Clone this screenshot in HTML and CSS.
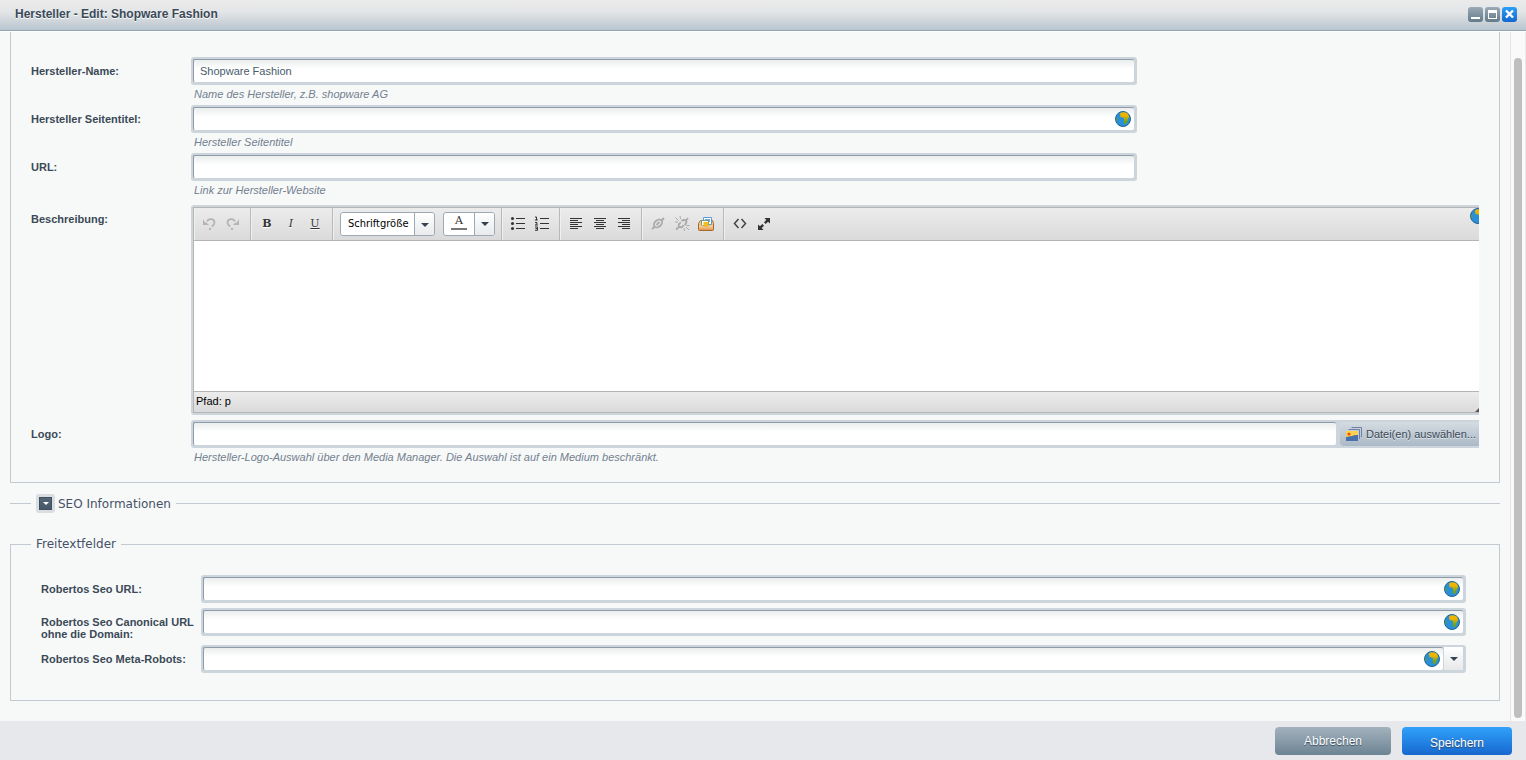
FILE: index.html
```html
<!DOCTYPE html>
<html lang="de">
<head>
<meta charset="utf-8">
<title>Hersteller - Edit: Shopware Fashion</title>
<link rel="stylesheet" href="styles.css">
</head>
<body>
<svg class="defs" aria-hidden="true">
  <defs>
    <linearGradient id="land" x1="0" y1="0" x2="0" y2="1"><stop offset="0.3" stop-color="#f0b400"/><stop offset="0.8" stop-color="#6aa51a"/></linearGradient>
    <linearGradient id="tray" x1="0" y1="0" x2="0" y2="1"><stop offset="0" stop-color="#fad9a8"/><stop offset="1" stop-color="#e0984e"/></linearGradient>
    <symbol id="globe" viewBox="0 0 16 16">
      <circle cx="8" cy="8" r="7.500" fill="#2a8fd6" stroke="#1f6590"/>
      <path d="M5 2.500L7 1.200l4 .3 2 1.500 1.200 3-1.400 2-.3 2.500-1.500 2.500H9.500L9 12V7.500L8 6.500 5.500 6.300z" fill="url(#land)"/>
      <path d="M1 7l1.200.6.3 1.500-1 1.200z" fill="#6aa51a"/>
    </symbol>
    <symbol id="arrow" viewBox="0 0 8 4"><path d="M0 0h8L4 4z" fill="#36424f"/></symbol>
  </defs>
</svg>
<div class="window">
  <header class="titlebar">
    <h1 class="title">Hersteller - Edit: Shopware Fashion</h1>
    <div class="tools">
      <button class="tool" aria-label="Minimieren"><svg width="15" height="15"><path d="M3 10h9v2H3z" fill="#fff"/></svg></button>
      <button class="tool" aria-label="Maximieren"><svg width="15" height="15"><path d="M3 3h9v9H3zM4 6v5h7V6z" fill="#fff" fill-rule="evenodd"/></svg></button>
      <button class="tool tool-close" aria-label="Schließen"><svg width="15" height="15"><path d="M4 3.500l7 7M11 3.500l-7 7" stroke="#fff" stroke-width="2.400"/></svg></button>
    </div>
  </header>
  <div class="body">
    <main class="content">
      <fieldset class="panel panel-main">
        <div class="row">
          <label class="label" for="name">Hersteller-Name:</label>
          <div class="cell short">
            <div class="field"><input class="input" id="name" type="text" value="Shopware Fashion"></div>
            <p class="help">Name des Hersteller, z.B. shopware AG</p>
          </div>
        </div>
        <div class="row">
          <label class="label" for="seitentitel">Hersteller Seitentitel:</label>
          <div class="cell short">
            <div class="field"><input class="input" id="seitentitel" type="text"><svg class="globe"><use href="#globe"/></svg></div>
            <p class="help">Hersteller Seitentitel</p>
          </div>
        </div>
        <div class="row">
          <label class="label" for="url">URL:</label>
          <div class="cell short">
            <div class="field"><input class="input" id="url" type="text"></div>
            <p class="help">Link zur Hersteller-Website</p>
          </div>
        </div>
        <div class="row row-editor">
          <label class="label" for="beschreibung">Beschreibung:</label>
          <div class="cell editor">
            <div class="toolbar">
              <div class="group">
                <button class="tb" aria-label="Rückgängig"><svg width="16" height="16"><path d="M6 5.500c1.500-3.500 7.500-3 7.500 1 0 2-1.200 3-2.700 4" fill="none" stroke="#b4b4b4" stroke-width="1.800"/><path d="M2 3v6h6l-2-2-2-.5zM8 12h2v2H8z" fill="#b4b4b4"/></svg></button>
                <button class="tb" aria-label="Wiederholen"><svg width="16" height="16"><path d="M10 5.500C8.500 2 2.500 2.500 2.500 6.500c0 2 1.200 3 2.700 4" fill="none" stroke="#b4b4b4" stroke-width="1.800"/><path d="M14 3v6H8l2-2 2-.5zM6 12h2v2H6z" fill="#b4b4b4"/></svg></button>
              </div>
              <div class="group">
                <button class="tb glyph bold">B</button>
                <button class="tb glyph italic">I</button>
                <button class="tb glyph underline">U</button>
              </div>
              <div class="group group-selects">
                <div class="combo">
                  <select class="size-select" aria-label="Schriftgröße"><option>Schriftgröße</option></select>
                  <svg class="combo-arrow" width="8" height="4"><use href="#arrow"/></svg>
                </div>
                <div class="split">
                  <button class="color" aria-label="Textfarbe">A</button>
                  <button class="drop" aria-label="Farbe wählen"><svg width="8" height="4"><use href="#arrow"/></svg></button>
                </div>
              </div>
              <div class="group">
                <button class="tb" aria-label="Aufzählung"><svg width="16" height="16" fill="#333"><circle cx="2.500" cy="2.500" r="1.500"/><circle cx="2.500" cy="7.500" r="1.500"/><circle cx="2.500" cy="12.500" r="1.500"/><path d="M6 2h9v1H6zM6 7h9v1H6zM6 12h9v1H6z"/></svg></button>
                <button class="tb" aria-label="Nummerierung"><svg width="16" height="16" fill="#333"><path d="M6 2h9v1H6zM6 7h9v1H6zM6 12h9v1H6z"/><path d="M1 1h1.500v3M.8 4h3M1 6.500h2v1.300L1.300 9H4M1 11h2.500v3.300H1M1.500 12.600h2" fill="none" stroke="#333"/></svg></button>
              </div>
              <div class="group">
                <button class="tb" aria-label="Linksbündig"><svg width="16" height="16" fill="#333"><path d="M2 2h12v1H2zM2 4h8v1H2zM2 6h12v1H2zM2 8h8v1H2zM2 10h12v1H2zM2 12h8v1H2z"/></svg></button>
                <button class="tb" aria-label="Zentriert"><svg width="16" height="16" fill="#333"><path d="M2 2h12v1H2zM4 4h8v1H4zM2 6h12v1H2zM4 8h8v1H4zM2 10h12v1H2zM4 12h8v1H4z"/></svg></button>
                <button class="tb" aria-label="Rechtsbündig"><svg width="16" height="16" fill="#333"><path d="M2 2h12v1H2zM6 4h8v1H6zM2 6h12v1H2zM6 8h8v1H6zM2 10h12v1H2zM6 12h8v1H6z"/></svg></button>
              </div>
              <div class="group">
                <button class="tb" aria-label="Link einfügen"><svg width="16" height="16" fill="none" stroke="#aaa" stroke-width="1.800"><ellipse cx="8" cy="7.500" rx="4.600" ry="3.200" transform="rotate(-40 8 7.500)"/><path d="M6.500 9l3-3M2 13l2.500-2M11.500 4.500L14 2"/></svg></button>
                <button class="tb" aria-label="Link entfernen"><svg width="16" height="16" fill="none" stroke="#aaa" stroke-width="1.800"><path d="M2 13.500L5 11c3 .8 4-.5 4.500-2M5 11c-1-2.500.5-4 2-4.500M7.500 5c2-1.800 3.500-1 4.500-.5L14 2M12 4.500c1 2 0 3.500-1.500 4.500"/><path d="M1.500 1.500l3 3M6 0l.5 3M1 6h3M10 12l.5 3M12 11l3 3M12.500 9.500h3" stroke-width="1"/></svg></button>
                <button class="tb" aria-label="Medium einfügen"><svg width="18" height="16"><path d="M1.500 7.500l2-3h12l1 3v6q0 1-1 1h-13q-1 0-1-1z" fill="url(#tray)" stroke="#a8672c"/><path d="M6.500 1.500h8v7h-8z" fill="#fff" stroke="#5d9ad0"/><path d="M8 3h5v3H8z" fill="#6aabe8"/><path d="M4.500 4.500h7v5h-7z" fill="#fff" stroke="#6f9a70"/><path d="M6.500 6h5v4h-5z" fill="#f2be19"/><path d="M2 9.500h4l1 1.500h4l1-1.500h4V14H2z" fill="url(#tray)"/></svg></button>
              </div>
              <div class="group group-last">
                <button class="tb" aria-label="Quelltext"><svg width="16" height="16" fill="none" stroke="#444" stroke-width="1.500"><path d="M6.500 3L2.500 7.500l4 4.500M9.500 3l4 4.500-4 4.500"/></svg></button>
                <button class="tb" aria-label="Vollbild"><svg width="16" height="16"><path d="M14 2v5.500L12 5.800 9.700 8 8 6.300 10.300 4 8.500 2zM2 14V8.500l2 1.700L6.300 8 8 9.700 5.700 12l1.800 2z" fill="#333"/></svg></button>
              </div>
              <svg class="globe globe-editor"><use href="#globe"/></svg>
            </div>
            <textarea class="textarea" id="beschreibung"></textarea>
            <div class="status">Pfad: p<svg class="grip" width="4" height="4"><path d="M4 0v4H0z" fill="#555"/></svg></div>
          </div>
        </div>
        <div class="row">
          <label class="label" for="logo">Logo:</label>
          <div class="cell">
            <div class="field field-file">
              <input class="input" id="logo" type="text">
              <button class="file-button">
                <svg width="17" height="16"><path d="M5.500 1.500h10V11M2.500 3.500h11V13" fill="none" stroke="#6d7fa8"/><path d="M0 5h12v9H0z" fill="#fdd050"/><path d="M0 11q3-.5 6-1 3-1.500 6-1v6H0z" fill="#4a70ac"/><circle cx="3" cy="8" r="1.600" fill="#e8501e"/></svg>
                <span>Datei(en) auswählen...</span>
              </button>
            </div>
            <p class="help">Hersteller-Logo-Auswahl über den Media Manager. Die Auswahl ist auf ein Medium beschränkt.</p>
          </div>
        </div>
      </fieldset>

      <fieldset class="panel panel-seo">
        <legend class="legend">
          <button class="toggle" aria-label="SEO Informationen aufklappen"><svg width="6" height="3" viewBox="0 0 6 3"><path d="M0 0h6L3 3z" fill="#fff"/></svg></button>
          <span>SEO Informationen</span>
        </legend>
      </fieldset>

      <fieldset class="panel panel-free">
        <legend class="legend">Freitextfelder</legend>
        <div class="row">
          <label class="label" for="seo-url">Robertos Seo URL:</label>
          <div class="cell"><div class="field"><input class="input" id="seo-url" type="text"><svg class="globe"><use href="#globe"/></svg></div></div>
        </div>
        <div class="row">
          <label class="label" for="canonical">Robertos Seo Canonical URL<br>ohne die Domain:</label>
          <div class="cell"><div class="field"><input class="input" id="canonical" type="text"><svg class="globe"><use href="#globe"/></svg></div></div>
        </div>
        <div class="row">
          <label class="label" for="robots">Robertos Seo Meta-Robots:</label>
          <div class="cell"><div class="field field-combo"><input class="input" id="robots" type="text"><button class="trigger" aria-label="Auswahl öffnen"><svg width="8" height="4"><use href="#arrow"/></svg></button><svg class="globe"><use href="#globe"/></svg></div></div>
        </div>
      </fieldset>
    </main>
    <div class="scrollbar"><div class="thumb"></div></div>
  </div>
  <footer class="footer">
    <button class="btn btn-cancel">Abbrechen</button>
    <button class="btn btn-save">Speichern</button>
  </footer>
</div>
</body>
</html>
```

FILE: styles.css
```css
* { box-sizing: border-box; }
body { margin: 0; font: 11px/12px "Liberation Sans", Arial, sans-serif; color: #475c6a; }
button, input, select, textarea { margin: 0; padding: 0; border: 0; font: inherit; color: inherit; background: none; outline: 0; }
svg { display: block; flex: none; }
.defs { position: absolute; width: 0; height: 0; }

.window { display: flex; flex-direction: column; height: 100vh; background: #f7f9f8; overflow: hidden; }

.titlebar { display: flex; flex: none; justify-content: space-between; align-items: flex-start; height: 31px; padding: 7px 9px 0 15px; background: linear-gradient(#ebebeb, #e3e5e6 40%, #b9c5cf); border-bottom: 1px solid #92a5b5; }
.title { margin: 0; font-size: 12px; line-height: 14px; font-weight: bold; color: #3b4957; text-shadow: 0 1px 0 #fff; }
.tools { display: flex; gap: 2px; }
.tool { width: 15px; height: 15px; border-radius: 3px; background: linear-gradient(#9aaab6, #647a8a); }
.tool-close { background: linear-gradient(#2aa0f8, #1467cd); }

.body { display: flex; flex: 1; min-height: 0; border-top: 1px solid #fdfefe; }
.content { flex: 1; min-width: 0; padding: 0 10px; overflow: hidden; }
.scrollbar { flex: none; width: 16px; padding: 26px 3px 3px; background: #fafafa; border-left: 1px solid #e4e4e4; border-right: 1px solid #e9e9e9; }
.thumb { width: 8px; height: 100%; border-radius: 4px; background: #bfbfbf; }

.panel { margin: 0; min-width: 0; border: 1px solid #c2c9d0; }
.panel-main { padding: 25px 20px 14px; border-top: 0; }
.panel-seo { margin-top: 11px; padding: 0 20px; border-width: 1px 0 0; }
.panel-free { display: flex; flex-direction: column; margin-top: 23px; padding: 23px 33px 27px 20px; }
.legend { display: flex; align-items: center; gap: 3px; padding: 0 5px; font: 12px/16px "DejaVu Sans", Verdana, sans-serif; color: #475069; }
.panel-free .row { margin: 0 0 5px 10px; }
.panel-free .row:last-child { margin-bottom: 0; }
.panel-seo .legend { margin-left: 1px; }
.toggle { display: flex; align-items: center; justify-content: center; width: 19px; height: 19px; border: 3px solid #dadde2; border-radius: 3px; background: linear-gradient(#566878, #465868); box-shadow: inset 0 0 0 1px #40505f; }

.row { display: flex; align-items: flex-start; }
.label { flex: none; width: 160px; padding-top: 8px; font-weight: bold; color: #3b4957; white-space: nowrap; }
.cell { flex: 1; min-width: 0; }
.short { flex: 0 1 auto; width: 73.5%; max-width: 946px; }
.field { position: relative; display: flex; height: 28px; padding: 2px 3px 3px 2px; border-radius: 3px; background: #cdd5dc; }
.input { flex: 1; min-width: 0; padding: 0 6px; border: solid #8f9ba8; border-width: 1px 0 0 1px; border-radius: 2px; background: linear-gradient(#ebeeee, #fff 9px); }
.help { margin: 0; height: 20px; padding: 3px 0 0 3px; font-style: italic; color: #738090; }
.globe { position: absolute; top: 6px; right: 6px; width: 16px; height: 16px; }

.row-editor { margin: 4px 0 5px; }
.editor { height: 210px; display: flex; flex-direction: column; padding: 2px 0 2px 2px; border-radius: 3px 0 0 3px; background: #cdd5dc; overflow: hidden; }
.toolbar { position: relative; display: flex; height: 34px; border: solid #b5b5b5; border-width: 1px 0 1px 1px; background: linear-gradient(#ececec, #dadada); overflow: hidden; }
.group { display: flex; align-items: center; padding: 0 5px 0 4px; border-right: 1px solid #b9b9b9; box-shadow: inset 1px 0 0 #f0f0f0; }
.group:first-child { padding-left: 3px; }
.group-last { border: 0; }
.tb { display: flex; align-items: center; justify-content: center; width: 24px; height: 24px; }
.glyph { font: bold 11px/24px "DejaVu Serif", "Liberation Serif", serif; color: #333; text-shadow: 0 1px 0 #fff; }
.italic { font-style: italic; font-weight: normal; }
.underline { font-weight: normal; text-decoration: underline; }
.group-selects { gap: 8px; padding: 0 6px 0 7px; }
.combo, .split { position: relative; display: flex; height: 24px; border: 1px solid #9da9b5; border-radius: 3px; background: #fff; overflow: hidden; }
.combo { width: 95px; }
.size-select { width: 100%; padding-left: 7px; appearance: none; border-radius: 2px; font: 11px/22px "DejaVu Sans Condensed", "Open Sans", sans-serif; color: #000; background: linear-gradient(#9da9b5, #9da9b5) 73px 0 / 1px 100% no-repeat, linear-gradient(#fff, #e8eaec) 74px 0 / 20px 100% no-repeat, #fff; }
.combo-arrow { position: absolute; right: 5px; top: 10px; pointer-events: none; }
.split { width: 52px; }
.color { display: flex; flex-direction: column; align-items: center; flex: 1; padding-top: 1px; font: 11px/14px "DejaVu Serif", "Liberation Serif", serif; color: #333; }
.color::after { content: ""; width: 16px; height: 2px; background: #777; }
.drop { display: flex; align-items: center; justify-content: center; width: 20px; border-left: 1px solid #9da9b5; background: linear-gradient(#fff, #e8eaec); }
.globe-editor { top: 0; right: -7px; }
.textarea { flex: 1; width: 100%; resize: none; border-left: 1px solid #b5b5b5; background: #fff; }
.status { position: relative; height: 22px; padding: 3px 0 0 2px; border: solid #b5b5b5; border-width: 1px 0 1px 1px; color: #000; background: linear-gradient(#ececec, #dadada); }
.grip { position: absolute; right: 0; bottom: 0; }

.field-file { padding-right: 0; border-radius: 3px 0 0 3px; }
.file-button { display: flex; align-items: center; gap: 3px; margin-left: 4px; padding: 0 3px 0 6px; height: 24px; border-radius: 4px 0 0 4px; color: #3b4957; background: linear-gradient(#d5dce2, #abb8c6); text-shadow: 0 1px 0 #dfe5ea; white-space: nowrap; }
.trigger { display: flex; align-items: center; justify-content: center; width: 20px; border-left: 1px solid #cdd5dc; background: linear-gradient(#fff, #e6e8ea); }
.field-combo .globe { right: 26px; }

.footer { display: flex; flex: none; justify-content: flex-end; gap: 11px; height: 39px; padding: 6px 14px 5px; background: #e6e8ec; }
.btn { height: 28px; border-radius: 4px; font-size: 12px; color: #fff; text-shadow: 0 1px 1px #33475a; }
.btn-cancel { width: 116px; background: linear-gradient(#a3b2bd, #6d8494); }
.btn-save { width: 110px; padding-top: 3px; background: linear-gradient(#31a2fb, #1767cf); }
```
